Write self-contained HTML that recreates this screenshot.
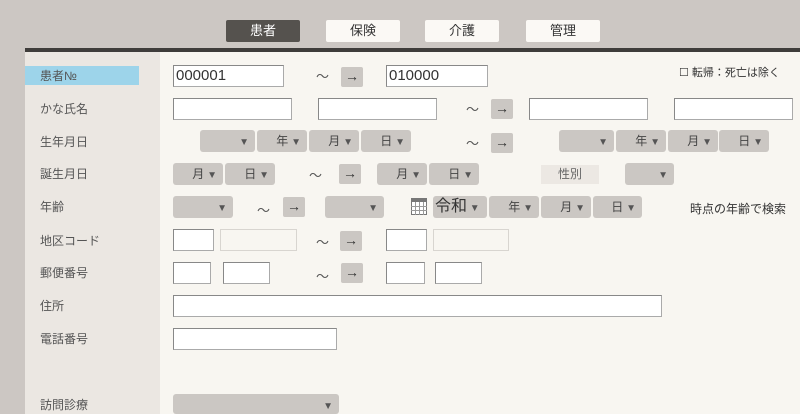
<!DOCTYPE html><html style="overflow:hidden;height:414px"><head><meta charset="utf-8"><style>
*{margin:0;padding:0;box-sizing:border-box}
body{width:800px;height:414px;overflow:hidden;background:#ccc7c3;position:relative;font-family:"Liberation Sans","Noto Sans CJK JP",sans-serif;color:#555;font-size:12px}
.a{position:absolute}
.tab{position:absolute;top:20px;height:22px;width:74px;background:#fbf9f5;border-radius:2px;text-align:center;line-height:22px;font-size:13px;color:#333}
.tab.on{background:#55524e;color:#fff}
.in{position:absolute;height:22px;background:#fff;border:1px solid #888;border-right-color:#aaa;border-bottom-color:#aaa;font-size:15px;color:#333;line-height:20px;padding-left:2px}
.dis{position:absolute;height:22px;background:#f8f6f1;border:1px solid #d8d5d0}
.sel{position:absolute;height:22px;background:#cbc7c3;border-radius:3px;text-align:right;padding-right:6px;line-height:22px;font-size:12px;color:#444}
.sel::after{content:" ▼";font-size:10px;color:#555}
.arr{position:absolute;width:22px;height:20px;background:#cbc7c3;border-radius:2px;text-align:center;line-height:19px;font-size:14px;color:#333}
.t{position:absolute;font-size:13px;color:#555}
.lb{position:absolute;left:40px;font-size:12px;color:#555}
</style></head><body>
<div class="tab on" style="left:226px">患者</div>
<div class="tab" style="left:326px">保険</div>
<div class="tab" style="left:425px">介護</div>
<div class="tab" style="left:526px">管理</div>
<div class="a" style="left:25px;top:48px;width:775px;height:4px;background:#3f3d3b"></div>
<div class="a" style="left:25px;top:52px;width:135px;height:362px;background:#ebe7e2"></div>
<div class="a" style="left:160px;top:52px;width:640px;height:362px;background:#f8f6f1"></div>
<div class="a" style="left:25px;top:66px;width:114px;height:19px;background:#9dd4ea"></div>
<div class="lb" style="top:67px">患者№</div>
<div class="lb" style="top:100px">かな氏名</div>
<div class="lb" style="top:133px">生年月日</div>
<div class="lb" style="top:165px">誕生月日</div>
<div class="lb" style="top:198px">年齢</div>
<div class="lb" style="top:232px">地区コード</div>
<div class="lb" style="top:264px">郵便番号</div>
<div class="lb" style="top:297px">住所</div>
<div class="lb" style="top:330px">電話番号</div>
<div class="lb" style="top:396px">訪問診療</div>
<div class="in" style="left:173px;top:65px;width:111px">000001</div>
<div class="t" style="left:316px;top:66px">～</div>
<div class="arr" style="left:341px;top:67px">→</div>
<div class="in" style="left:386px;top:65px;width:102px">010000</div>
<div class="t" style="left:679px;top:64px;font-size:11px;color:#333">☐ 転帰：死亡は除く</div>
<div class="in" style="left:173px;top:98px;width:119px"></div>
<div class="in" style="left:318px;top:98px;width:119px"></div>
<div class="t" style="left:466px;top:99px">～</div>
<div class="arr" style="left:491px;top:99px">→</div>
<div class="in" style="left:529px;top:98px;width:119px"></div>
<div class="in" style="left:674px;top:98px;width:119px"></div>
<div class="sel" style="left:200px;top:130px;width:55px"></div>
<div class="sel" style="left:257px;top:130px;width:50px">年</div>
<div class="sel" style="left:309px;top:130px;width:50px">月</div>
<div class="sel" style="left:361px;top:130px;width:50px">日</div>
<div class="t" style="left:466px;top:133px">～</div>
<div class="arr" style="left:491px;top:133px">→</div>
<div class="sel" style="left:559px;top:130px;width:55px"></div>
<div class="sel" style="left:616px;top:130px;width:50px">年</div>
<div class="sel" style="left:668px;top:130px;width:50px">月</div>
<div class="sel" style="left:719px;top:130px;width:50px">日</div>
<div class="sel" style="left:173px;top:163px;width:50px">月</div>
<div class="sel" style="left:225px;top:163px;width:50px">日</div>
<div class="t" style="left:309px;top:165px">～</div>
<div class="arr" style="left:339px;top:164px">→</div>
<div class="sel" style="left:377px;top:163px;width:50px">月</div>
<div class="sel" style="left:429px;top:163px;width:50px">日</div>
<div class="a" style="left:541px;top:165px;width:58px;height:19px;background:#ece8e3;text-align:center;line-height:19px;font-size:12px;color:#666">性別</div>
<div class="sel" style="left:625px;top:163px;width:49px"></div>
<div class="sel" style="left:173px;top:196px;width:60px"></div>
<div class="t" style="left:257px;top:200px">～</div>
<div class="arr" style="left:283px;top:197px">→</div>
<div class="sel" style="left:325px;top:196px;width:59px"></div>
<svg class="a" style="left:411px;top:198px" width="16" height="17"><rect x="0.5" y="0.5" width="15" height="16" fill="#fff" stroke="#777"/><rect x="0" y="0" width="16" height="4" fill="#777"/><path d="M0 8.5H16M0 12.5H16M4.5 4V17M8.5 4V17M12.5 4V17" stroke="#999"/></svg>
<div class="sel" style="left:433px;top:196px;width:54px;text-align:left;padding-left:2px;font-size:16px;color:#333">令和</div>
<div class="sel" style="left:489px;top:196px;width:50px">年</div>
<div class="sel" style="left:541px;top:196px;width:50px">月</div>
<div class="sel" style="left:593px;top:196px;width:49px">日</div>
<div class="t" style="left:690px;top:200px;font-size:12px;color:#333">時点の年齢で検索</div>
<div class="in" style="left:173px;top:229px;width:41px"></div>
<div class="dis" style="left:220px;top:229px;width:77px"></div>
<div class="t" style="left:316px;top:232px">～</div>
<div class="arr" style="left:340px;top:231px">→</div>
<div class="in" style="left:386px;top:229px;width:41px"></div>
<div class="dis" style="left:433px;top:229px;width:76px"></div>
<div class="in" style="left:173px;top:262px;width:38px"></div>
<div class="in" style="left:223px;top:262px;width:47px"></div>
<div class="t" style="left:316px;top:266px">～</div>
<div class="arr" style="left:341px;top:263px">→</div>
<div class="in" style="left:386px;top:262px;width:39px"></div>
<div class="in" style="left:435px;top:262px;width:47px"></div>
<div class="in" style="left:173px;top:295px;width:489px"></div>
<div class="in" style="left:173px;top:328px;width:164px"></div>
<div class="sel" style="left:173px;top:394px;width:166px;height:20px;line-height:22px"></div>
</body></html>
